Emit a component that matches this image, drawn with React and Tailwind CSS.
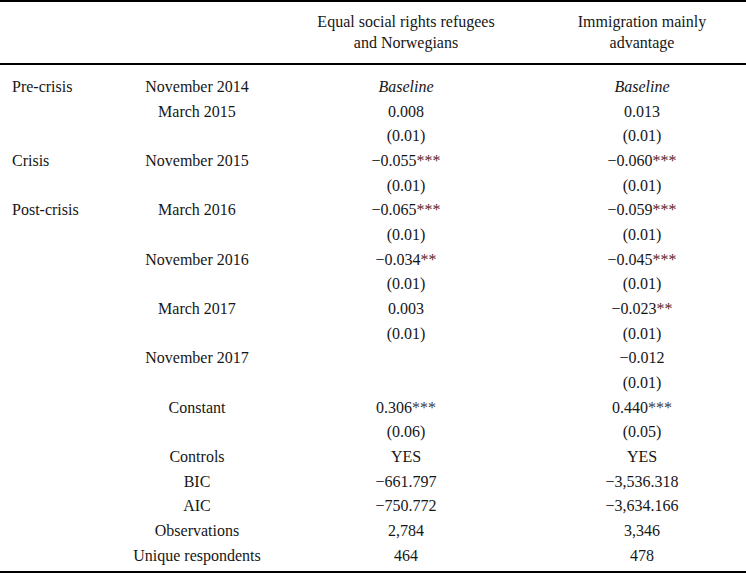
import React from "react";

// Regression table rows: [period, wave, col1, col2]
// values: { v, s } where s is the significance stars
const rows = [
  { period: "Pre-crisis", wave: "November 2014", a: { v: "Baseline", italic: true }, b: { v: "Baseline", italic: true } },
  { wave: "March 2015", a: { v: "0.008" }, b: { v: "0.013" } },
  { a: { v: "(0.01)" }, b: { v: "(0.01)" } },
  { period: "Crisis", wave: "November 2015", a: { v: "\u22120.055", s: "***" }, b: { v: "\u22120.060", s: "***" } },
  { a: { v: "(0.01)" }, b: { v: "(0.01)" } },
  { period: "Post-crisis", wave: "March 2016", a: { v: "\u22120.065", s: "***" }, b: { v: "\u22120.059", s: "***" } },
  { a: { v: "(0.01)" }, b: { v: "(0.01)" } },
  { wave: "November 2016", a: { v: "\u22120.034", s: "**" }, b: { v: "\u22120.045", s: "***" } },
  { a: { v: "(0.01)" }, b: { v: "(0.01)" } },
  { wave: "March 2017", a: { v: "0.003" }, b: { v: "\u22120.023", s: "**" } },
  { a: { v: "(0.01)" }, b: { v: "(0.01)" } },
  { wave: "November 2017", a: null, b: { v: "\u22120.012" } },
  { a: null, b: { v: "(0.01)" } },
  { wave: "Constant", a: { v: "0.306", s: "***", gray: true }, b: { v: "0.440", s: "***", gray: true } },
  { a: { v: "(0.06)" }, b: { v: "(0.05)" } },
  { wave: "Controls", a: { v: "YES" }, b: { v: "YES" } },
  { wave: "BIC", a: { v: "\u2212661.797" }, b: { v: "\u22123,536.318" } },
  { wave: "AIC", a: { v: "\u2212750.772" }, b: { v: "\u22123,634.166" } },
  { wave: "Observations", a: { v: "2,784" }, b: { v: "3,346" } },
  { wave: "Unique respondents", a: { v: "464" }, b: { v: "478" } },
];

function Cell({ c }) {
  if (!c) return <div />;
  return (
    <div className="text-center">
      <span className={c.italic ? "italic" : ""}>{c.v}</span>
      {c.s && (
        <span className={c.gray ? "text-[#3a3a44]" : "text-[#5e2626]"}>{c.s}</span>
      )}
    </div>
  );
}

export default function App() {
  return (
    <div
      className="w-[746px] h-[574px] bg-white text-[#161616] text-[16px]"
      style={{ fontFamily: '"Liberation Serif", "Times New Roman", serif' }}
    >
      <div className="border-t-2 border-black" />

      {/* Header */}
      <div className="grid grid-cols-[120px_154px_264px_208px] pt-[9px] pb-[10px] leading-[21px]">
        <div />
        <div />
        <div className="text-center">
          Equal social rights refugees
          <br />
          and Norwegians
        </div>
        <div className="text-center">
          Immigration mainly
          <br />
          advantage
        </div>
      </div>

      <div className="border-t-2 border-black" />

      {/* Body */}
      <div className="pt-[9.6px] pb-[2.6px]">
        {rows.map((r, i) => (
          <div
            key={i}
            className="grid grid-cols-[120px_154px_264px_208px] h-[24.68px] items-center leading-none"
          >
            <div className="pl-[12px]">{r.period || ""}</div>
            <div className="text-center">{r.wave || ""}</div>
            <Cell c={r.a} />
            <Cell c={r.b} />
          </div>
        ))}
      </div>

      <div className="border-t-2 border-black" />
    </div>
  );
}
